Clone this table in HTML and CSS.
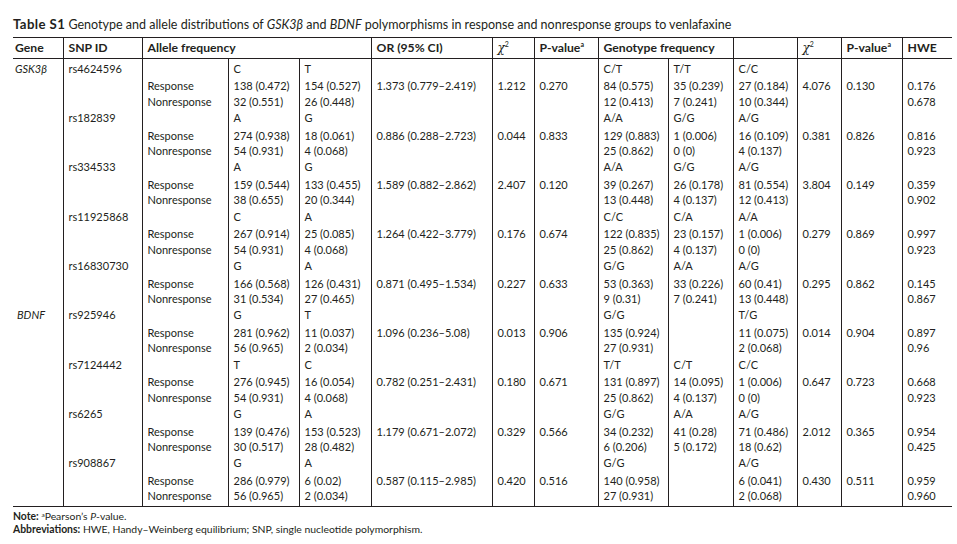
FILE: index.html
```html
<!DOCTYPE html>
<html lang="en">
<head>
<meta charset="utf-8">
<title>Table S1</title>
<link rel="stylesheet" href="styles.css">
</head>
<body>
<div class="page">
  <p class="caption"><b class="label">Table S1</b> Genotype and allele distributions of <i>GSK3β</i> and <i>BDNF</i> polymorphisms in response and nonresponse groups to venlafaxine</p>
  <table class="data">
    <colgroup>
      <col class="c-gene"><col class="c-snp"><col class="c-grp"><col class="c-a1"><col class="c-a2"><col class="c-or"><col class="c-chi"><col class="c-p"><col class="c-g1"><col class="c-g2"><col class="c-g3"><col class="c-chi2"><col class="c-p2"><col class="c-hwe">
    </colgroup>
    <thead>
      <tr>
        <th>Gene</th><th>SNP ID</th><th colspan="3">Allele frequency</th><th>OR (95% CI)</th><th><i class="chi">χ</i><sup>2</sup></th><th>P-value<sup class="a">a</sup></th><th colspan="2">Genotype frequency</th><th></th><th><i class="chi">χ</i><sup>2</sup></th><th>P-value<sup class="a">a</sup></th><th>HWE</th>
      </tr>
    </thead>
    <tbody>
      <tr class="snp"><td class="gene"><i>GSK3β</i></td><td>rs4624596</td><td></td><td>C</td><td>T</td><td></td><td></td><td></td><td>C/T</td><td>T/T</td><td>C/C</td><td></td><td></td><td></td></tr>
      <tr class="resp"><td></td><td></td><td>Response</td><td>138 (0.472)</td><td>154 (0.527)</td><td>1.373 (0.779–2.419)</td><td>1.212</td><td>0.270</td><td>84 (0.575)</td><td>35 (0.239)</td><td>27 (0.184)</td><td>4.076</td><td>0.130</td><td>0.176</td></tr>
      <tr class="nonresp"><td></td><td></td><td>Nonresponse</td><td>32 (0.551)</td><td>26 (0.448)</td><td></td><td></td><td></td><td>12 (0.413)</td><td>7 (0.241)</td><td>10 (0.344)</td><td></td><td></td><td>0.678</td></tr>

      <tr class="snp"><td></td><td>rs182839</td><td></td><td>A</td><td>G</td><td></td><td></td><td></td><td>A/A</td><td>G/G</td><td>A/G</td><td></td><td></td><td></td></tr>
      <tr class="resp"><td></td><td></td><td>Response</td><td>274 (0.938)</td><td>18 (0.061)</td><td>0.886 (0.288–2.723)</td><td>0.044</td><td>0.833</td><td>129 (0.883)</td><td>1 (0.006)</td><td>16 (0.109)</td><td>0.381</td><td>0.826</td><td>0.816</td></tr>
      <tr class="nonresp"><td></td><td></td><td>Nonresponse</td><td>54 (0.931)</td><td>4 (0.068)</td><td></td><td></td><td></td><td>25 (0.862)</td><td>0 (0)</td><td>4 (0.137)</td><td></td><td></td><td>0.923</td></tr>

      <tr class="snp"><td></td><td>rs334533</td><td></td><td>A</td><td>G</td><td></td><td></td><td></td><td>A/A</td><td>G/G</td><td>A/G</td><td></td><td></td><td></td></tr>
      <tr class="resp"><td></td><td></td><td>Response</td><td>159 (0.544)</td><td>133 (0.455)</td><td>1.589 (0.882–2.862)</td><td>2.407</td><td>0.120</td><td>39 (0.267)</td><td>26 (0.178)</td><td>81 (0.554)</td><td>3.804</td><td>0.149</td><td>0.359</td></tr>
      <tr class="nonresp"><td></td><td></td><td>Nonresponse</td><td>38 (0.655)</td><td>20 (0.344)</td><td></td><td></td><td></td><td>13 (0.448)</td><td>4 (0.137)</td><td>12 (0.413)</td><td></td><td></td><td>0.902</td></tr>

      <tr class="snp"><td></td><td>rs11925868</td><td></td><td>C</td><td>A</td><td></td><td></td><td></td><td>C/C</td><td>C/A</td><td>A/A</td><td></td><td></td><td></td></tr>
      <tr class="resp"><td></td><td></td><td>Response</td><td>267 (0.914)</td><td>25 (0.085)</td><td>1.264 (0.422–3.779)</td><td>0.176</td><td>0.674</td><td>122 (0.835)</td><td>23 (0.157)</td><td>1 (0.006)</td><td>0.279</td><td>0.869</td><td>0.997</td></tr>
      <tr class="nonresp"><td></td><td></td><td>Nonresponse</td><td>54 (0.931)</td><td>4 (0.068)</td><td></td><td></td><td></td><td>25 (0.862)</td><td>4 (0.137)</td><td>0 (0)</td><td></td><td></td><td>0.923</td></tr>

      <tr class="snp"><td></td><td>rs16830730</td><td></td><td>G</td><td>A</td><td></td><td></td><td></td><td>G/G</td><td>A/A</td><td>A/G</td><td></td><td></td><td></td></tr>
      <tr class="resp"><td></td><td></td><td>Response</td><td>166 (0.568)</td><td>126 (0.431)</td><td>0.871 (0.495–1.534)</td><td>0.227</td><td>0.633</td><td>53 (0.363)</td><td>33 (0.226)</td><td>60 (0.41)</td><td>0.295</td><td>0.862</td><td>0.145</td></tr>
      <tr class="nonresp"><td></td><td></td><td>Nonresponse</td><td>31 (0.534)</td><td>27 (0.465)</td><td></td><td></td><td></td><td>9 (0.31)</td><td>7 (0.241)</td><td>13 (0.448)</td><td></td><td></td><td>0.867</td></tr>

      <tr class="snp"><td class="gene gene-b"><i>BDNF</i></td><td>rs925946</td><td></td><td>G</td><td>T</td><td></td><td></td><td></td><td>G/G</td><td></td><td>T/G</td><td></td><td></td><td></td></tr>
      <tr class="resp"><td></td><td></td><td>Response</td><td>281 (0.962)</td><td>11 (0.037)</td><td>1.096 (0.236–5.08)</td><td>0.013</td><td>0.906</td><td>135 (0.924)</td><td></td><td>11 (0.075)</td><td>0.014</td><td>0.904</td><td>0.897</td></tr>
      <tr class="nonresp"><td></td><td></td><td>Nonresponse</td><td>56 (0.965)</td><td>2 (0.034)</td><td></td><td></td><td></td><td>27 (0.931)</td><td></td><td>2 (0.068)</td><td></td><td></td><td>0.96</td></tr>

      <tr class="snp"><td></td><td>rs7124442</td><td></td><td>T</td><td>C</td><td></td><td></td><td></td><td>T/T</td><td>C/T</td><td>C/C</td><td></td><td></td><td></td></tr>
      <tr class="resp"><td></td><td></td><td>Response</td><td>276 (0.945)</td><td>16 (0.054)</td><td>0.782 (0.251–2.431)</td><td>0.180</td><td>0.671</td><td>131 (0.897)</td><td>14 (0.095)</td><td>1 (0.006)</td><td>0.647</td><td>0.723</td><td>0.668</td></tr>
      <tr class="nonresp"><td></td><td></td><td>Nonresponse</td><td>54 (0.931)</td><td>4 (0.068)</td><td></td><td></td><td></td><td>25 (0.862)</td><td>4 (0.137)</td><td>0 (0)</td><td></td><td></td><td>0.923</td></tr>

      <tr class="snp"><td></td><td>rs6265</td><td></td><td>G</td><td>A</td><td></td><td></td><td></td><td>G/G</td><td>A/A</td><td>A/G</td><td></td><td></td><td></td></tr>
      <tr class="resp"><td></td><td></td><td>Response</td><td>139 (0.476)</td><td>153 (0.523)</td><td>1.179 (0.671–2.072)</td><td>0.329</td><td>0.566</td><td>34 (0.232)</td><td>41 (0.28)</td><td>71 (0.486)</td><td>2.012</td><td>0.365</td><td>0.954</td></tr>
      <tr class="nonresp"><td></td><td></td><td>Nonresponse</td><td>30 (0.517)</td><td>28 (0.482)</td><td></td><td></td><td></td><td>6 (0.206)</td><td>5 (0.172)</td><td>18 (0.62)</td><td></td><td></td><td>0.425</td></tr>

      <tr class="snp"><td></td><td>rs908867</td><td></td><td>G</td><td>A</td><td></td><td></td><td></td><td>G/G</td><td></td><td>A/G</td><td></td><td></td><td></td></tr>
      <tr class="resp"><td></td><td></td><td>Response</td><td>286 (0.979)</td><td>6 (0.02)</td><td>0.587 (0.115–2.985)</td><td>0.420</td><td>0.516</td><td>140 (0.958)</td><td></td><td>6 (0.041)</td><td>0.430</td><td>0.511</td><td>0.959</td></tr>
      <tr class="nonresp"><td></td><td></td><td>Nonresponse</td><td>56 (0.965)</td><td>2 (0.034)</td><td></td><td></td><td></td><td>27 (0.931)</td><td></td><td>2 (0.068)</td><td></td><td></td><td>0.960</td></tr>
    </tbody>
  </table>
  <div class="notes">
    <p><b>Note:</b> <sup class="a">a</sup>Pearson’s <i>P</i>-value.</p>
    <p><b>Abbreviations:</b> HWE, Handy–Weinberg equilibrium; SNP, single nucleotide polymorphism.</p>
  </div>
</div>
</body>
</html>
```
FILE: styles.css
```css
html, body {
  margin: 0;
  padding: 0;
  background: #ffffff;
}
body {
  font-family: Lato, "Open Sans", "Liberation Sans", sans-serif;
  color: #231f20;
}
.page {
  padding: 17px 0 0 13px;
  width: 939px;
}
.caption {
  margin: 0 0 5px 0;
  font-size: 12.5px;
  line-height: 14px;
  white-space: nowrap;
}
.caption .label {
  font-weight: 700;
  font-size: 13.2px;
  letter-spacing: 0.4px;
}
.data {
  width: 939px;
  border-collapse: collapse;
  table-layout: fixed;
  font-size: 11px;
}
.c-gene { width: 50px; }
.c-snp { width: 79px; }
.c-grp { width: 86px; }
.c-a1 { width: 71px; }
.c-a2 { width: 72px; }
.c-or { width: 121px; }
.c-chi { width: 42px; }
.c-p { width: 64px; }
.c-g1 { width: 70px; }
.c-g2 { width: 65px; }
.c-g3 { width: 64px; }
.c-chi2 { width: 44px; }
.c-p2 { width: 61px; }
.c-hwe { width: 50px; }

.data thead tr {
  height: 21px;
}
.data th {
  font-weight: 700;
  font-size: 12.2px;
  text-align: left;
  padding: 0 0 0 5px;
  line-height: 14px;
  vertical-align: middle;
  border-top: 1px solid #231f20;
  border-bottom: 1px solid #231f20;
  white-space: nowrap;
}
.data th:first-child {
  padding-left: 2px;
}
.data th + th,
.data td + td {
  border-left: 1px solid #231f20;
}
.data .chi {
  font-family: "DejaVu Serif", "Liberation Serif", serif;
  font-weight: 400;
  font-size: 12px;
}
.data sup {
  font-size: 7px;
  line-height: 0;
  vertical-align: 5px;
  font-weight: 400;
}
.data th sup.a {
  font-weight: 700;
}
.data tbody tr {
  height: 16.45px;
}
.data tbody tr:last-child {
  height: 21px;
}
.data td {
  padding: 4.3px 0 0 5px;
  line-height: 11px;
  vertical-align: top;
  white-space: nowrap;
}
.data tr.resp td {
  padding-top: 5.4px;
}
.data tr.nonresp td {
  padding-top: 4.4px;
}
.data td.gene {
  padding-left: 2px;
}
.data td.gene-b {
  padding-left: 4px;
}
.data tbody tr:last-child td {
  border-bottom: 1px solid #231f20;
}
.notes {
  margin-top: 3px;
  font-size: 10.4px;
  line-height: 12.7px;
}
.notes p {
  margin: 0;
  white-space: nowrap;
}
.notes sup.a {
  font-size: 6.5px;
  line-height: 0;
  vertical-align: 3px;
}
```
